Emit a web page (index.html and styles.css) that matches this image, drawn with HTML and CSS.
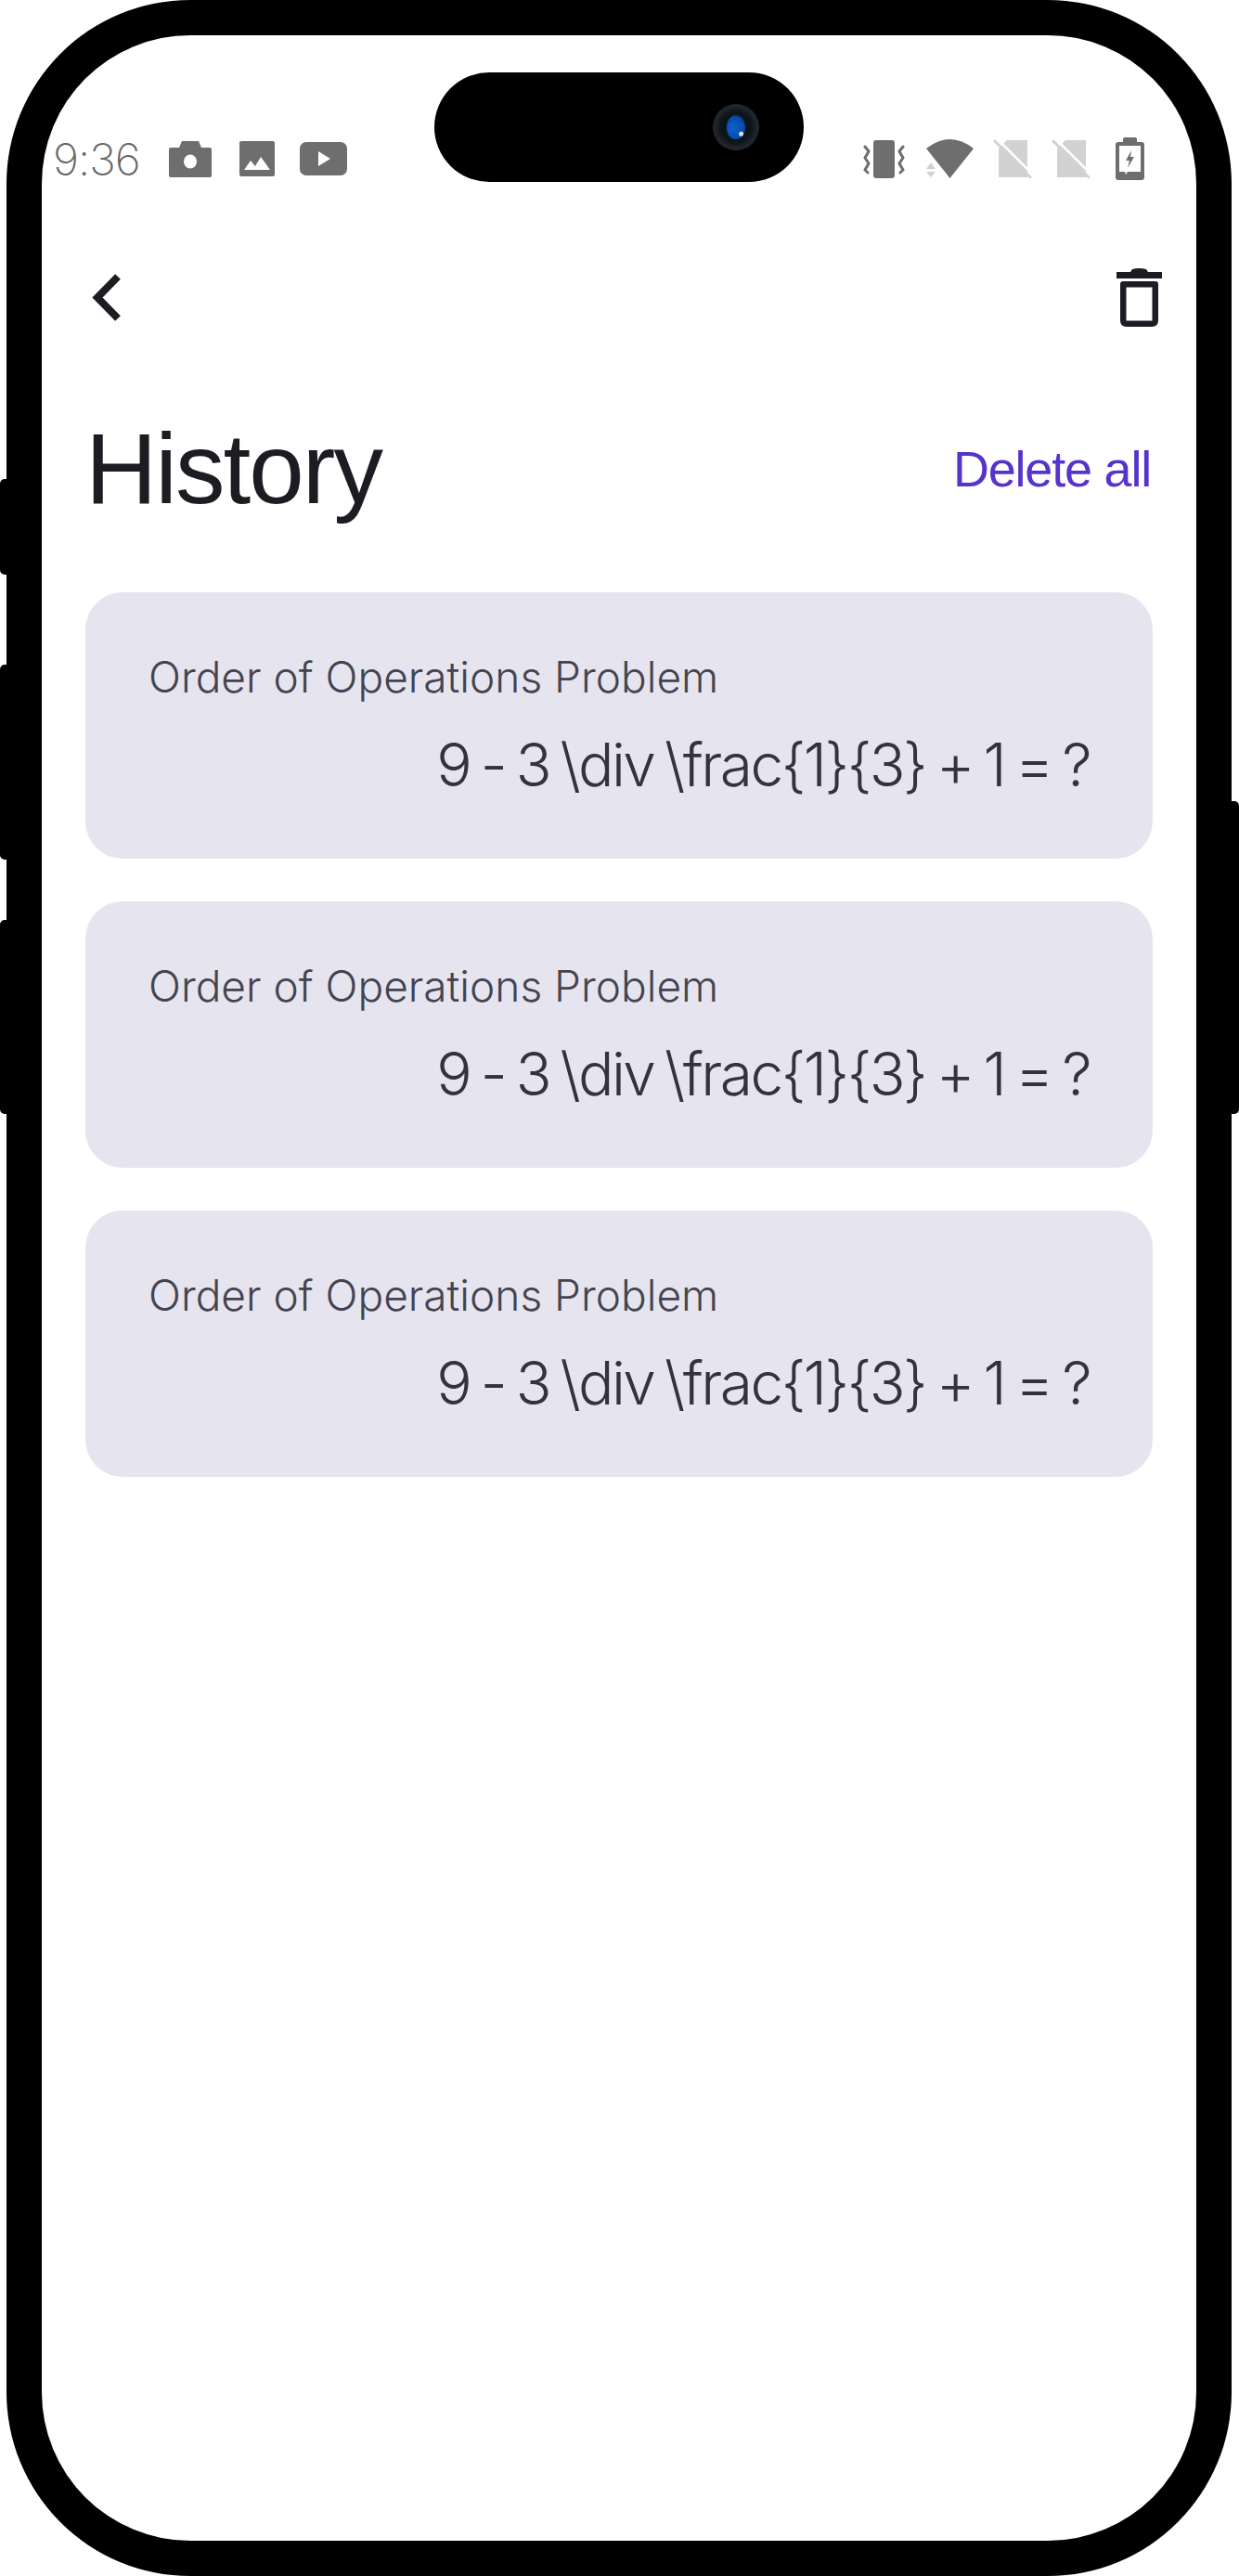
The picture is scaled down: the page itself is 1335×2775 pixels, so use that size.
FILE: index.html
```html
<!DOCTYPE html>
<html lang="en">
<head>
    <meta charset="UTF-8">
    <meta name="viewport" content="width=device-width, initial-scale=1.0">
    <title>History</title>
    <link rel="stylesheet" href="styles.css">
</head>
<body>
    <div class="phone">
        <div class="side-btn left-one"></div>
        <div class="side-btn left-two"></div>
        <div class="side-btn left-three"></div>
        <div class="side-btn right-one"></div>

        <div class="screen">
            <div class="island"><div class="lens"><div class="lens-glass"></div></div></div>

            <div class="status-bar">
                <div class="status-left">
                    <span class="clock">9:36</span>
                    <svg class="ic-camera" viewBox="0 0 46 39"><path fill="#6e6e6e" d="M14 0h18l3 7h9q2 0 2 2v28q0 2-2 2H2q-2 0-2-2V9q0-2 2-2h9z"/><ellipse cx="23" cy="22" rx="7" ry="7.5" fill="#fff"/></svg>
                    <svg class="ic-image" viewBox="0 0 38 38"><rect width="38" height="38" rx="2" fill="#6e6e6e"/><path fill="#fff" d="M5 31l7-10 5 6 6-10 10 14z"/></svg>
                    <svg class="ic-video" viewBox="0 0 51 36"><rect width="51" height="36" rx="7" fill="#6e6e6e"/><path fill="#fff" d="M20 10l13 8-13 8z"/></svg>
                </div>
                <div class="status-right">
                    <svg class="ic-vibrate" viewBox="0 0 45 41"><rect x="11" width="23" height="41" rx="3" fill="#6e6e6e"/><path fill="none" stroke="#6e6e6e" stroke-width="3" stroke-linecap="round" stroke-linejoin="round" d="M2 7l4 5-4 7 4 6-4 7 3 3M43 7l-4 5 4 7-4 6 4 7-3 3"/></svg>
                    <svg class="ic-wifi" viewBox="0 0 51 42"><path fill="#6e6e6e" d="M0 10Q25.500-10 51 10L25.500 42z"/><path fill="#d2d2d2" d="M0 32l5-7 5 7zM0 35h10l-5 6z"/></svg>
                    <svg class="ic-sim" viewBox="0 0 42 42"><path fill="#d2d2d2" d="M15 1h22v40H6V10z"/><path stroke="#fff" stroke-width="2.500" d="M5 0l38 38"/><path stroke="#d2d2d2" stroke-width="3" stroke-linecap="round" d="M2 2l38 39"/></svg>
                    <svg class="ic-sim" viewBox="0 0 42 42"><path fill="#d2d2d2" d="M15 1h22v40H6V10z"/><path stroke="#fff" stroke-width="2.500" d="M5 0l38 38"/><path stroke="#d2d2d2" stroke-width="3" stroke-linecap="round" d="M2 2l38 39"/></svg>
                    <svg class="ic-battery" viewBox="0 0 31 46"><path fill="#6e6e6e" d="M10 0h11q2 0 2 2v3h5q3 0 3 3v35q0 3-3 3H3q-3 0-3-3V8q0-3 3-3h5V2q0-2 2-2z"/><path fill="#fff" d="M4 9h23v28H13l-2 3-1-3H4z"/><path fill="#6e6e6e" d="M17 14l-6 11h4l-2 8 7-12h-4z"/></svg>
                </div>
            </div>

            <div class="nav-row">
                <svg class="ic-back" viewBox="0 0 31 51"><path fill="none" stroke="#1c1c22" stroke-width="8" d="M28 3L6 25.500 28 48"/></svg>
                <svg class="ic-trash" viewBox="0 0 49 63"><path fill="#1c1c22" d="M0 4h15l2-3q7-2 15 0l2 3h15v7H0z"/><path fill="none" stroke="#1c1c22" stroke-width="6.500" stroke-linejoin="round" d="M7.250 17.250h34.500v39q0 3.500-3.500 3.500h-27.500q-3.500 0-3.500-3.500z"/></svg>
            </div>

            <div class="title-row">
                <h1>History</h1>
                <a class="delete-all" href="#">Delete all</a>
            </div>

            <div class="history-list">
                <div class="history-card">
                    <p class="card-title">Order of Operations Problem</p>
                    <p class="card-math">9 - 3 \div \frac{1}{3} + 1 = ?</p>
                </div>
                <div class="history-card">
                    <p class="card-title">Order of Operations Problem</p>
                    <p class="card-math">9 - 3 \div \frac{1}{3} + 1 = ?</p>
                </div>
                <div class="history-card">
                    <p class="card-title">Order of Operations Problem</p>
                    <p class="card-math">9 - 3 \div \frac{1}{3} + 1 = ?</p>
                </div>
            </div>
        </div>
    </div>
</body>
</html>
```

FILE: styles.css
```css
* {
    margin: 0;
    padding: 0;
    box-sizing: border-box;
}

html, body {
    background: white;
}

body {
    font-family: 'Liberation Sans', Arial, sans-serif;
    height: 2775px;
    overflow: hidden;
    padding-left: 7px;
}

.phone {
    position: relative;
    width: 1320px;
    height: 2775px;
    background: black;
    border-radius: 198px;
    padding: 38px;
}

.side-btn {
    position: absolute;
    width: 12px;
    background: black;
    border-radius: 5px;
}

.left-one { left: -7px; top: 516px; height: 103px; }
.left-two { left: -7px; top: 716px; height: 210px; }
.left-three { left: -7px; top: 991px; height: 209px; }
.right-one { right: -8px; top: 863px; height: 337px; }

.screen {
    position: relative;
    height: 100%;
    background: white;
    border-radius: 160px;
    padding-top: 109px;
}

.island {
    position: absolute;
    left: 423px;
    top: 40px;
    width: 398px;
    height: 118px;
    background: black;
    border-radius: 59px;
}

.lens {
    position: absolute;
    left: 300px;
    top: 34px;
    width: 50px;
    height: 50px;
    border-radius: 50%;
    background: radial-gradient(circle, #0b1418 45%, #22262a 65%, #14171a 100%);
}

.lens-glass {
    width: 20px;
    height: 26px;
    margin: 12px 0 0 15px;
    border-radius: 50% 50% 45% 45%;
    background:
        radial-gradient(circle at 78% 78%, #d8e4ee 0, #d8e4ee 2px, transparent 3px),
        radial-gradient(circle at 35% 55%, #0f5fd0 0%, #0a4aa8 60%, #07264f 100%);
}

.status-bar {
    display: flex;
    justify-content: space-between;
    align-items: center;
    height: 48px;
    padding: 0 56px 0 12px;
}

.status-left, .status-right {
    display: flex;
    align-items: center;
}

.clock {
    font-family: Inter, sans-serif;
    font-weight: 200;
    font-size: 48px;
    color: #666;
    width: 125px;
    letter-spacing: -1px;
}

.ic-camera { width: 46px; height: 39px; margin-right: 30px; }
.ic-image { width: 38px; height: 38px; margin-right: 27px; }
.ic-video { width: 51px; height: 36px; }
.ic-vibrate { width: 45px; height: 41px; margin-right: 23px; }
.ic-wifi { width: 51px; height: 42px; margin-right: 21px; }
.ic-sim { width: 42px; height: 42px; margin-right: 21px; }
.ic-battery { width: 31px; height: 46px; margin-left: 6px; }

.nav-row {
    display: flex;
    justify-content: space-between;
    align-items: center;
    height: 63px;
    margin-top: 94px;
    padding: 0 37px 0 54px;
}

.ic-back { width: 31px; height: 51px; }
.ic-trash { width: 49px; height: 63px; }

.title-row {
    display: flex;
    justify-content: space-between;
    align-items: center;
    margin-top: 93px;
    padding: 0 49px 0 47px;
}

h1 {
    font-weight: 400;
    font-size: 107px;
    line-height: 120px;
    color: #1c1c22;
    letter-spacing: -2px;
}

.delete-all {
    font-size: 54px;
    color: #5533cc;
    text-decoration: none;
    letter-spacing: -1.200px;
}

.history-list {
    display: flex;
    flex-direction: column;
    gap: 46px;
    margin-top: 73px;
    padding: 0 47px;
}

.history-card {
    height: 287px;
    background: #e6e5ef;
    border-radius: 40px;
    padding: 63px 68px 0;
}

.card-title {
    font-family: Inter, sans-serif;
    font-weight: 300;
    font-size: 46px;
    line-height: 56px;
    color: #44434f;
}

.card-math {
    font-family: Inter, sans-serif;
    font-weight: 300;
    font-size: 64px;
    line-height: 76px;
    color: #33323e;
    text-align: right;
    letter-spacing: -2.500px;
    word-spacing: -4px;
    margin-top: 29px;
}
```
